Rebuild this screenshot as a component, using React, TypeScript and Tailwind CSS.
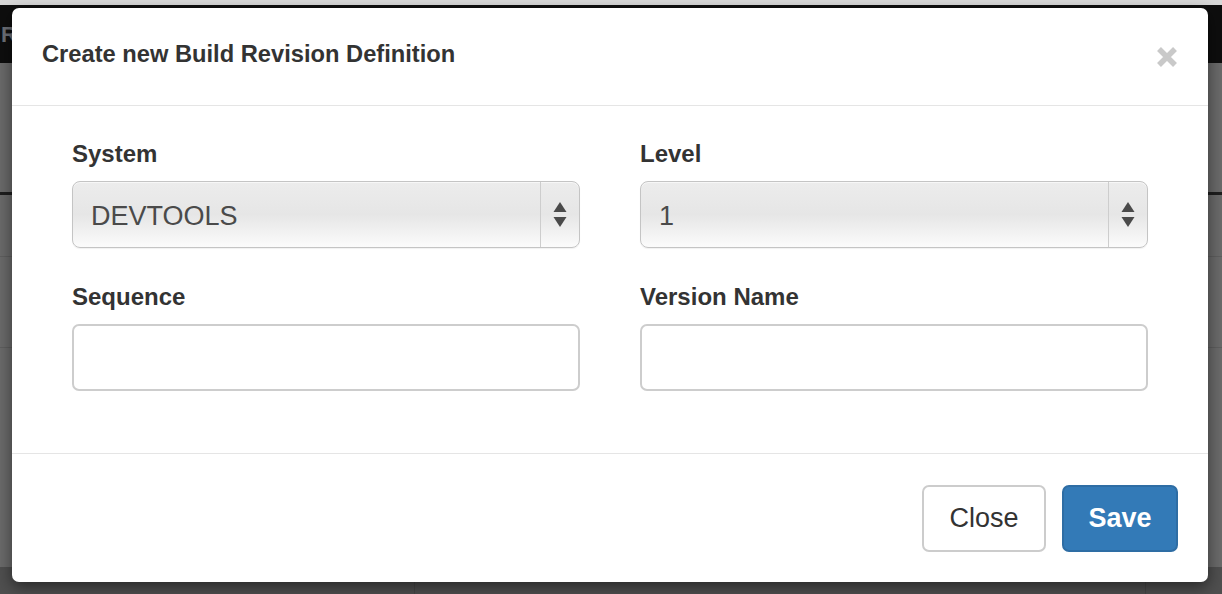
import React from "react";

const font = { fontFamily: '"Liberation Sans", Arial, sans-serif' };

function SelectArrows() {
  return (
    <svg width="14" height="26" viewBox="0 0 14 26" className="block">
      <polygon points="7,0 13.5,10 0.5,10" fill="#4a4a4a" />
      <polygon points="0.5,15 13.5,15 7,25" fill="#4a4a4a" />
    </svg>
  );
}

function FakeSelect({ value }: { value: string }) {
  return (
    <div className="flex h-[67px] w-full items-stretch overflow-hidden rounded-[8px] border border-[#c4c4c4] bg-gradient-to-b from-[#ececec] via-[#e6e6e6] to-[#fbfbfb] shadow-[inset_0_1px_0_#f7f7f7,0_1px_1px_rgba(0,0,0,0.06)]">
      <div className="flex flex-1 items-center pl-[18px] pt-[3px] text-[27px] text-[#4a4a4a]">
        {value}
      </div>
      <div className="flex w-[39px] items-center justify-center border-l border-[#cdcdcd]">
        <SelectArrows />
      </div>
    </div>
  );
}

function Field({ label, children }: { label: string; children: React.ReactNode }) {
  return (
    <div className="flex flex-col">
      <label className="mb-[13px] text-[24px] font-bold leading-[28px] text-[#333]">{label}</label>
      {children}
    </div>
  );
}

function TextBox() {
  return (
    <input
      className="h-[67px] w-full rounded-[7px] border-2 border-[#cdcdcd] bg-white px-4 text-[26px] outline-none"
      type="text"
    />
  );
}

export default function App() {
  return (
    <div className="relative h-[594px] w-[1222px] overflow-hidden bg-[#6a6a6a]" style={font}>
      {/* page behind the backdrop */}
      <div className="h-[5px] bg-[#d8d8d8]" />
      <div className="flex h-[58px] items-center bg-[#0e0e0e] pl-[1px] text-[22px] font-bold text-[#6d7077]">
        Re
      </div>
      <div className="h-[129px]" />
      <div className="h-[3px] bg-[#1e1e1e]" />
      <div className="h-[62px] border-b border-[#5e5e5e]" />
      <div className="h-[91px] border-b border-[#5e5e5e]" />
      <div className="h-[219px]" />
      <div className="flex h-[30px] bg-[#4f4f4f]">
        <div className="w-[415px] border-r border-[#464646]" />
        <div className="w-[731px] border-r border-[#464646]" />
      </div>

      {/* modal */}
      <div className="absolute left-[12px] top-[8px] flex h-[574px] w-[1196px] flex-col rounded-[7px] bg-white shadow-[0_5px_15px_rgba(0,0,0,0.5)]">
        <div className="flex h-[98px] items-start justify-between border-b border-[#e5e5e5] pl-[30px] pr-[30px] pt-[33px]">
          <h4 className="text-[23.7px] font-bold leading-[26px] text-[#333]">
            Create new Build Revision Definition
          </h4>
          <svg width="22" height="22" viewBox="0 0 22 22" className="mt-[5px]">
            <path d="M3 3 L19 19 M19 3 L3 19" stroke="#c9c9c9" strokeWidth="5.5" />
          </svg>
        </div>

        <div className="grid flex-1 grid-cols-2 content-start gap-x-[60px] gap-y-[35px] px-[60px] pt-[34px]">
          <Field label="System">
            <FakeSelect value="DEVTOOLS" />
          </Field>
          <Field label="Level">
            <FakeSelect value="1" />
          </Field>
          <Field label="Sequence">
            <TextBox />
          </Field>
          <Field label="Version Name">
            <TextBox />
          </Field>
        </div>

        <div className="flex h-[129px] items-center justify-end gap-[16px] border-t border-[#e5e5e5] px-[30px]">
          <button className="h-[67px] w-[124px] rounded-[7px] border-2 border-[#cccccc] bg-white pt-[1px] text-[27px] text-[#333]">
            Close
          </button>
          <button className="h-[67px] w-[116px] rounded-[7px] border-2 border-[#2e6da4] bg-[#337ab7] pt-[1px] text-[27px] font-bold text-white">
            Save
          </button>
        </div>
      </div>
    </div>
  );
}
